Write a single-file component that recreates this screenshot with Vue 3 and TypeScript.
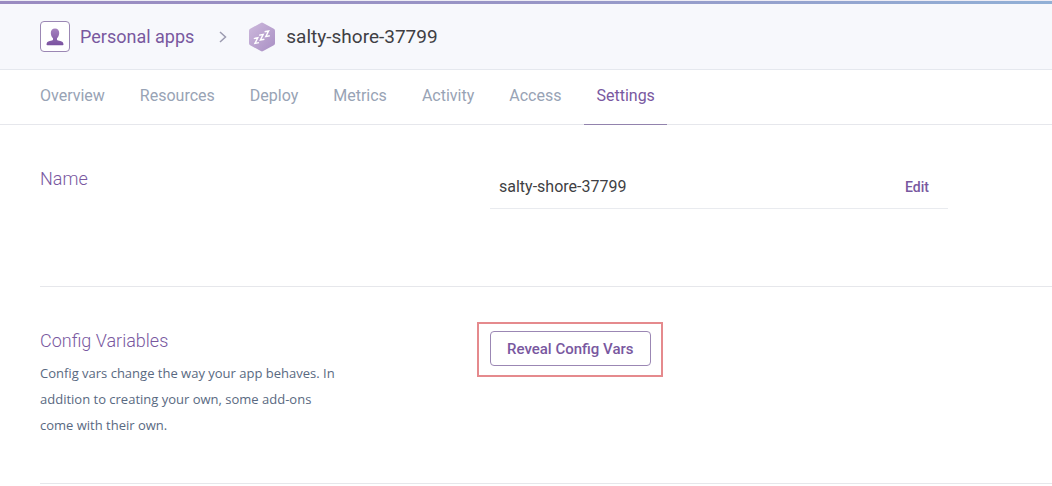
<script setup lang="ts">
import { ref } from 'vue'

const tabs: string[] = ['Overview', 'Resources', 'Deploy', 'Metrics', 'Activity', 'Access', 'Settings']
const activeTab = ref<string>('Settings')
const appName = 'salty-shore-37799'
</script>

<template>
  <div class="page">
    <div class="accent"></div>
    <header class="header">
      <a class="owner" href="#">
        <span class="avatar">
          <svg width="18" height="18" viewBox="0 0 18 18" aria-hidden="true">
            <defs>
              <linearGradient id="person" x1="0" y1="0" x2="0" y2="1">
                <stop offset="0" stop-color="#a682bf" />
                <stop offset="1" stop-color="#7a52a0" />
              </linearGradient>
            </defs>
            <path
              fill="url(#person)"
              d="M9 0.5c2.700 0 4.300 1.900 4.200 4.600-.1 2.300-.8 4-2.200 5.200v1.500c.3.600 1.600.9 3.300 1.300 2 .4 3 1.300 3.200 3.400 0 .5-.4.800-.9.800H1.400c-.5 0-.9-.3-.9-.8.2-2.100 1.200-3 3.200-3.400 1.700-.4 3-.7 3.300-1.300v-1.500C5.600 9.100 4.900 7.400 4.800 5.100 4.700 2.400 6.300.5 9 .5z"
            />
          </svg>
        </span>
        <span>Personal apps</span>
      </a>
      <svg class="chevron" width="8" height="12" viewBox="0 0 8 12" aria-hidden="true">
        <path d="M1 1l5.500 5L1 11" fill="none" stroke="#9c9bb0" stroke-width="1.500" />
      </svg>
      <a class="app" href="#">
        <svg width="28" height="30" viewBox="0 0 28 30" aria-hidden="true">
          <defs>
            <linearGradient id="hex" x1="0" y1="0" x2="1" y2="1">
              <stop offset="0" stop-color="#cdb9dc" />
              <stop offset="1" stop-color="#a98fc4" />
            </linearGradient>
          </defs>
          <path
            fill="url(#hex)"
            d="M12.800.9q1.200-.7 2.400 0l10.600 5.900q1.200.7 1.200 2v12.400q0 1.300-1.200 2l-10.600 5.900q-1.200.7-2.400 0L2.200 23.200Q1 22.500 1 21.200V8.800q0-1.300 1.200-2z"
          />
          <g fill="none" stroke="#fff" stroke-width="1.400">
            <path d="M5.800 16.600l4-.8-2.800 5.600 4-.8" />
            <path d="M11.200 13.200l4-.8-2.800 5.600 4-.8" />
            <path d="M16.600 9.800l4-.8-2.800 5.600 4-.8" />
          </g>
        </svg>
        <span class="app-name">{{ appName }}</span>
      </a>
    </header>

    <nav class="tabs">
      <a
        v-for="tab in tabs"
        :key="tab"
        href="#"
        class="tab"
        :class="{ active: tab === activeTab }"
        @click.prevent="activeTab = tab"
      >{{ tab }}</a>
    </nav>

    <main class="sections">
      <section class="section name-section">
        <div class="intro">
          <h2>Name</h2>
        </div>
        <div class="field">
          <span>{{ appName }}</span>
          <button type="button" class="edit">Edit</button>
        </div>
      </section>

      <section class="section">
        <div class="intro">
          <h2>Config Variables</h2>
          <p>Config vars change the way your app behaves. In addition to creating your own, some add-ons come with their own.</p>
        </div>
        <div class="highlight">
          <button type="button" class="reveal">Reveal Config Vars</button>
        </div>
      </section>
    </main>
  </div>
</template>

<style>
body {
  margin: 0;
  background: #fff;
}
</style>

<style scoped>
.page {
  font-family: Roboto, "Liberation Sans", sans-serif;
  color: #3f3f44;
}
a {
  color: inherit;
  text-decoration: none;
}
button {
  font-family: inherit;
  cursor: pointer;
}
.accent {
  height: 3px;
  border-top: 1px solid #eeedf5;
  background: linear-gradient(90deg, #9a8bc1, #9895c6 50%, #91b0d6);
}
.header {
  display: flex;
  align-items: center;
  height: 65px;
  padding: 0 40px;
  background: #f7f8fc;
  border-bottom: 1px solid #e5e8ee;
  font-size: 18px;
}
.owner {
  display: flex;
  align-items: center;
  gap: 10px;
  color: #79589f;
}
.avatar {
  display: flex;
  align-items: center;
  justify-content: center;
  box-sizing: border-box;
  width: 30px;
  height: 31px;
  background: #fff;
  border: 1px solid #9b87b4;
  border-radius: 4px;
}
.chevron {
  margin: 0 21px 0 25px;
}
.app {
  display: flex;
  align-items: center;
  gap: 10px;
}
.app-name {
  font-size: 19px;
}
.tabs {
  display: flex;
  gap: 11px;
  height: 54px;
  padding: 0 28px;
  border-bottom: 1px solid #e6e7ec;
  font-size: 16px;
  line-height: 52px;
  color: #98a3b5;
}
.tab {
  height: 54px;
  padding: 0 12px;
}
.tab.active {
  color: #79589f;
  border-bottom: 1px solid #9283ad;
}
.sections {
  padding-left: 40px;
}
.section {
  display: grid;
  grid-template-columns: 450px 1fr;
  align-items: start;
  box-sizing: border-box;
  min-height: 197px;
  padding-top: 40px;
  border-bottom: 1px solid #e6e7eb;
}
.name-section {
  min-height: 162px;
}
.intro {
  width: 300px;
}
h2 {
  margin: 0;
  font-size: 18px;
  font-weight: 300;
  line-height: 27px;
  color: #79589f;
}
p {
  margin: 6px 0 0;
  font-family: "Open Sans", "Noto Sans", sans-serif;
  font-size: 13px;
  line-height: 26px;
  color: #596981;
}
.field {
  display: flex;
  align-items: center;
  justify-content: space-between;
  box-sizing: border-box;
  height: 44px;
  max-width: 458px;
  padding: 0 19px 0 9px;
  border-bottom: 1px solid #e9ebef;
  font-size: 16px;
}
.edit {
  padding: 0;
  border: 0;
  background: none;
  color: #79589f;
  font-size: 14px;
  font-weight: 500;
}
.highlight {
  justify-self: start;
  margin: -5px 0 0 -13px;
  padding: 7px 10px 9px 11px;
  border: 2px solid #e58a8d;
}
.reveal {
  display: block;
  height: 35px;
  padding: 0 16px;
  background: #fff;
  border: 1px solid #9b87b4;
  border-radius: 4px;
  color: #79589f;
  font-size: 15px;
  font-weight: 500;
}
</style>
